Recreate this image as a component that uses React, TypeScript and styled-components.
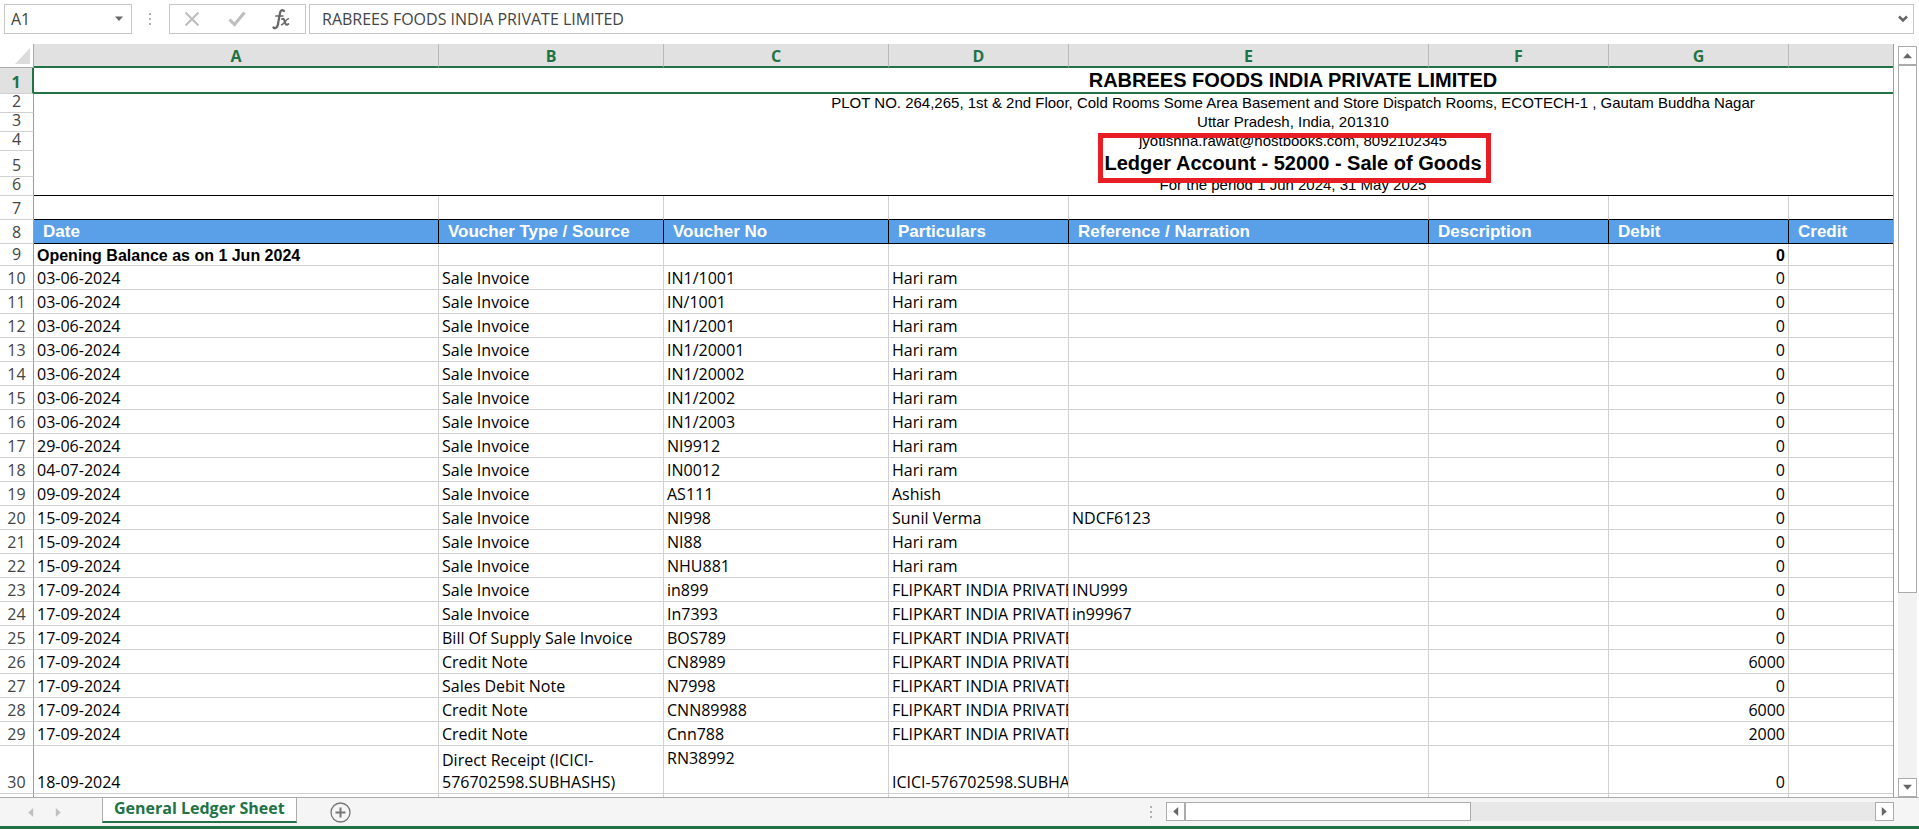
import React from "react";
import styled, { createGlobalStyle } from "styled-components";

const SANS = '"Open Sans", "Noto Sans", sans-serif';
const ARIAL = '"Liberation Sans", Arial, sans-serif';

const Global = createGlobalStyle`
  *, *::before, *::after { box-sizing: border-box; }
  body { margin: 0; background: #fff; font-family: ${SANS}; }
  button, input { font: inherit; margin: 0; }
`;

const Workbook = styled.div`
  display: flex;
  flex-direction: column;
  height: 100vh;
  overflow: hidden;
`;

const FormulaBar = styled.header`
  display: flex;
  flex: none;
  height: 44px;
  padding: 4px 5px 10px 4px;
`;

const BoxedGroup = styled.div<{ $width?: number }>`
  display: flex;
  align-items: center;
  min-width: 0;
  border: 1px solid #c6c6c6;
  background: #fff;
  flex: ${(p) => (p.$width ? `0 0 ${p.$width}px` : "1")};
`;

const FieldInput = styled.input<{ $indent: number }>`
  flex: 1;
  min-width: 0;
  width: 100%;
  height: 28px;
  padding: 0 0 0 ${(p) => p.$indent}px;
  border: 0;
  outline: 0;
  background: transparent;
  color: #444;
  font-size: 16px;
`;

const IconButton = styled.button<{ $width: number }>`
  display: flex;
  flex: 0 0 ${(p) => p.$width}px;
  align-items: center;
  justify-content: center;
  height: 28px;
  padding: 0;
  border: 0;
  background: transparent;
`;

const Grip = styled.div<{ $width: number }>`
  display: flex;
  flex: 0 0 ${(p) => p.$width}px;
  align-items: center;
  justify-content: center;
`;

const Main = styled.main`
  display: flex;
  flex: 1;
  min-height: 0;
`;

const GridPane = styled.div`
  flex: 1;
  min-width: 0;
  overflow: hidden;
  border-right: 1px solid #9f9f9f;
`;

const Sheet = styled.table`
  width: 2552px;
  table-layout: fixed;
  border-collapse: separate;
  border-spacing: 0;
  color: #000;
  font-size: 16px;
  line-height: 22px;
`;

const Corner = styled.td`
  height: 24px;
  padding: 0 3px 3px 0;
  border-right: 1px solid #ababab;
  border-bottom: 1px solid #ababab;
  vertical-align: bottom;
  text-align: right;
  line-height: 0;
`;

const ColumnLabel = styled.th`
  height: 24px;
  padding: 2px 0 0;
  border-right: 1px solid #b8b8b8;
  border-bottom: 2px solid #217346;
  background: #e1e1e1;
  color: #217346;
  font-weight: 700;
  line-height: 20px;
`;

const RowLabel = styled.th<{ $active?: boolean }>`
  padding: 0;
  border-right: ${(p) => (p.$active ? "2px solid #217346" : "1px solid #9c9c9c")};
  border-bottom: 1px solid #d0d0d0;
  background: ${(p) => (p.$active ? "#e1e1e1" : "#fff")};
  color: ${(p) => (p.$active ? "#217346" : "#444")};
  font-weight: ${(p) => (p.$active ? 700 : 400)};
  vertical-align: bottom;
`;

const Clip = styled.div<{ $height: number; $align?: string; $spill?: boolean }>`
  display: flex;
  align-items: ${(p) => p.$align || "flex-end"};
  justify-content: center;
  height: ${(p) => p.$height}px;
  overflow: ${(p) => (p.$spill ? "visible" : "hidden")};
  white-space: nowrap;
`;

const Banner = styled.td<{ $edge?: "active" | "rule" }>`
  padding: 0;
  border-bottom: ${(p) =>
    p.$edge === "active" ? "2px solid #217346" : p.$edge === "rule" ? "1px solid #000" : "0"};
  font-family: ${ARIAL};
`;

const Heading = styled.span`
  position: relative;
  font-size: 20px;
  font-weight: 700;
  line-height: 24px;
`;

const Detail = styled.span`
  font-size: 15px;
  line-height: 20px;
`;

const Marker = styled.span`
  position: absolute;
  inset: -18px -9px -8px -6px;
  border: 5px solid #e81e25;
`;

const Cell = styled.td<{ $bold?: boolean; $number?: boolean; $top?: boolean; $rule?: boolean }>`
  padding: ${(p) => (p.$bold ? 2 : 1)}px 3px 0;
  overflow: hidden;
  border-right: 1px solid #d0d0d0;
  border-bottom: 1px solid ${(p) => (p.$rule ? "#000" : "#d0d0d0")};
  font-family: ${(p) => (p.$bold ? ARIAL : SANS)};
  font-weight: ${(p) => (p.$bold ? 700 : 400)};
  line-height: ${(p) => (p.$bold ? 19 : 22)}px;
  text-align: ${(p) => (p.$number ? "right" : "left")};
  vertical-align: ${(p) => (p.$top ? "top" : "bottom")};
  white-space: nowrap;
`;

const FieldName = styled.th`
  padding: 1px 9px 0;
  border-right: 1px solid #000;
  border-bottom: 1px solid #000;
  background: #5aa0e8;
  color: #fff;
  font-family: ${ARIAL};
  font-size: 17px;
  font-weight: 700;
  text-align: left;
`;

const Row = styled.tr<{ $height: number }>`
  height: ${(p) => p.$height}px;
`;

const VScroll = styled.div`
  display: flex;
  flex: 0 0 25px;
  flex-direction: column;
  padding: 2px 2px 0 4px;
`;

const VTrack = styled.div`
  flex: 1;
  background: #f2f2f2;
`;

const VThumb = styled.div`
  height: 74%;
  border: 1px solid #ababab;
  background: #fff;
`;

const ArrowButton = styled.button`
  display: flex;
  flex: 0 0 19px;
  align-items: center;
  justify-content: center;
  min-height: 19px;
  padding: 0;
  border: 1px solid #ababab;
  background: #fff;
`;

const TabBar = styled.footer`
  display: flex;
  flex: none;
  height: 32px;
  border-top: 1px solid #ababab;
  border-bottom: 3px solid #217346;
  background: #f5f5f5;
`;

const TabNav = styled.nav`
  display: flex;
  flex: 0 0 102px;
  padding: 0 28px 0 16px;
`;

const SheetTab = styled.button`
  height: 25px;
  padding: 0 11px 3px;
  border: 1px solid #ababab;
  border-top: 0;
  border-bottom: 2px solid #217346;
  background: #fff;
  color: #217346;
  font-size: 16px;
  font-weight: 700;
  line-height: 20px;
`;

const AddSheet = styled.button`
  display: flex;
  align-items: center;
  height: 28px;
  padding: 0 0 0 33px;
  border: 0;
  background: transparent;
`;

const HScrollArea = styled.div`
  display: flex;
  flex: 0 0 770px;
  height: 28px;
  padding-right: 25px;
  margin-left: auto;
`;

const HScroll = styled.div`
  display: flex;
  flex: 1;
  height: 19px;
  margin-top: 4px;
`;

const HTrack = styled.div`
  flex: 1;
  background: #e8e8e8;
`;

const HThumb = styled.div`
  width: 41.5%;
  height: 19px;
  border: 1px solid #ababab;
  background: #fff;
`;

type Direction = "up" | "down" | "left" | "right";
const ANGLE: Record<Direction, number> = { up: 0, right: 90, down: 180, left: 270 };

function Triangle({ dir, color = "#666", size = 9 }: { dir: Direction; color?: string; size?: number }) {
  return (
    <svg width={size} height={size} viewBox="0 0 10 10" aria-hidden="true">
      <path d="M0 8 5 2.5 10 8Z" fill={color} transform={`rotate(${ANGLE[dir]} 5 5)`} />
    </svg>
  );
}

function Dots() {
  return (
    <svg width="3" height="12" viewBox="0 0 3 12" aria-hidden="true">
      <path d="M0 0h2v2H0zM0 5h2v2H0zM0 10h2v2H0z" fill="#b0b0b0" />
    </svg>
  );
}

const COLUMNS: [string, number][] = [
  ["A", 405], ["B", 225], ["C", 225], ["D", 180], ["E", 360], ["F", 180], ["G", 180], ["", 763],
];

const FIELDS = [
  "Date", "Voucher Type / Source", "Voucher No", "Particulars",
  "Reference / Narration", "Description", "Debit", "Credit",
];

const OPENING = ["Opening Balance as on 1 Jun 2024", "", "", "", "", "", "0", ""];

const FK = "FLIPKART INDIA PRIVATE";
type Entry = [date: string, type: string, no: string, party: string, ref: string, debit: string];

const ENTRIES: Entry[] = [
  ["03-06-2024", "Sale Invoice", "IN1/1001", "Hari ram", "", "0"],
  ["03-06-2024", "Sale Invoice", "IN/1001", "Hari ram", "", "0"],
  ["03-06-2024", "Sale Invoice", "IN1/2001", "Hari ram", "", "0"],
  ["03-06-2024", "Sale Invoice", "IN1/20001", "Hari ram", "", "0"],
  ["03-06-2024", "Sale Invoice", "IN1/20002", "Hari ram", "", "0"],
  ["03-06-2024", "Sale Invoice", "IN1/2002", "Hari ram", "", "0"],
  ["03-06-2024", "Sale Invoice", "IN1/2003", "Hari ram", "", "0"],
  ["29-06-2024", "Sale Invoice", "NI9912", "Hari ram", "", "0"],
  ["04-07-2024", "Sale Invoice", "IN0012", "Hari ram", "", "0"],
  ["09-09-2024", "Sale Invoice", "AS111", "Ashish", "", "0"],
  ["15-09-2024", "Sale Invoice", "NI998", "Sunil Verma", "NDCF6123", "0"],
  ["15-09-2024", "Sale Invoice", "NI88", "Hari ram", "", "0"],
  ["15-09-2024", "Sale Invoice", "NHU881", "Hari ram", "", "0"],
  ["17-09-2024", "Sale Invoice", "in899", FK, "INU999", "0"],
  ["17-09-2024", "Sale Invoice", "In7393", FK, "in99967", "0"],
  ["17-09-2024", "Bill Of Supply Sale Invoice", "BOS789", FK, "", "0"],
  ["17-09-2024", "Credit Note", "CN8989", FK, "", "6000"],
  ["17-09-2024", "Sales Debit Note", "N7998", FK, "", "0"],
  ["17-09-2024", "Credit Note", "CNN89988", FK, "", "6000"],
  ["17-09-2024", "Credit Note", "Cnn788", FK, "", "2000"],
];

export default function App() {
  return (
    <Workbook>
      <Global />
      <FormulaBar>
        <BoxedGroup $width={128}>
          <FieldInput $indent={6} aria-label="Name box" defaultValue="A1" />
          <IconButton $width={24} aria-label="Name list">
            <Triangle dir="down" size={8} />
          </IconButton>
        </BoxedGroup>
        <Grip $width={37}><Dots /></Grip>
        <BoxedGroup $width={137}>
          <IconButton $width={44} aria-label="Cancel">
            <svg width="16" height="16" viewBox="0 0 16 16" fill="none" stroke="#bdbdbd" strokeWidth="2">
              <path d="M1.5 1.5 14.5 14.5M14.5 1.5 1.5 14.5" />
            </svg>
          </IconButton>
          <IconButton $width={46} aria-label="Enter">
            <svg width="18" height="16" viewBox="0 0 18 16" fill="none" stroke="#bdbdbd" strokeWidth="3">
              <path d="M1.5 8.5 6.5 13.5 16.5 1.5" />
            </svg>
          </IconButton>
          <IconButton $width={42} aria-label="Insert function">
            <svg width="18" height="22" viewBox="0 0 18 22" fill="none" stroke="#666" strokeLinecap="round">
              <path d="M12 3C10 1 8.400 2.500 7.800 6L6 16C5.400 19.500 3.500 21 1.500 19.500" strokeWidth="2.200" />
              <path d="M3.800 8H11" strokeWidth="1.500" />
              <path d="M10 11C11.600 10 12.200 11.500 12.900 14S14.300 17.500 16.300 16" strokeWidth="2" />
              <path d="M16.500 10.800C14.500 10.800 12 16.600 9.500 16.800" strokeWidth="1.400" />
            </svg>
          </IconButton>
        </BoxedGroup>
        <Grip $width={3} />
        <BoxedGroup>
          <FieldInput $indent={12} aria-label="Formula" defaultValue="RABREES FOODS INDIA PRIVATE LIMITED" />
          <IconButton $width={20} aria-label="Expand formula bar">
            <svg width="10" height="8" viewBox="0 0 10 8" fill="none" stroke="#666" strokeWidth="2.500">
              <path d="M1 1.500 5 5.500 9 1.500" />
            </svg>
          </IconButton>
        </BoxedGroup>
      </FormulaBar>

      <Main>
        <GridPane>
          <Sheet>
            <colgroup>
              <col width={34} />
              {COLUMNS.map(([name, width]) => <col key={name} width={width} />)}
            </colgroup>
            <thead>
              <tr>
                <Corner>
                  <svg width="15" height="16" viewBox="0 0 15 16" aria-hidden="true">
                    <path d="M15 0V16H0Z" fill="#dcdcdc" />
                  </svg>
                </Corner>
                {COLUMNS.map(([name]) => <ColumnLabel key={name} scope="col">{name}</ColumnLabel>)}
              </tr>
            </thead>
            <tbody>
              <tr>
                <RowLabel $active scope="row"><Clip $height={25} $spill>1</Clip></RowLabel>
                <Banner $edge="active" colSpan={8}>
                  <Clip $height={24} $align="center"><Heading>RABREES FOODS INDIA PRIVATE LIMITED</Heading></Clip>
                </Banner>
              </tr>
              <tr>
                <RowLabel scope="row"><Clip $height={18} $spill>2</Clip></RowLabel>
                <Banner colSpan={8}>
                  <Clip $height={19} $spill>
                    <Detail>PLOT NO. 264,265, 1st &amp; 2nd Floor, Cold Rooms Some Area Basement and Store Dispatch Rooms, ECOTECH-1 , Gautam Buddha Nagar</Detail>
                  </Clip>
                </Banner>
              </tr>
              <tr>
                <RowLabel scope="row"><Clip $height={18} $spill>3</Clip></RowLabel>
                <Banner colSpan={8}><Clip $height={19} $spill><Detail>Uttar Pradesh, India, 201310</Detail></Clip></Banner>
              </tr>
              <tr>
                <RowLabel scope="row"><Clip $height={18} $spill>4</Clip></RowLabel>
                <Banner colSpan={8}><Clip $height={19} $spill><Detail>jyotishna.rawat@hostbooks.com, 8092102345</Detail></Clip></Banner>
              </tr>
              <tr>
                <RowLabel scope="row"><Clip $height={25} $spill>5</Clip></RowLabel>
                <Banner colSpan={8}>
                  <Clip $height={26} $align="flex-start" $spill>
                    <Heading>Ledger Account - 52000 - Sale of Goods<Marker /></Heading>
                  </Clip>
                </Banner>
              </tr>
              <tr>
                <RowLabel scope="row"><Clip $height={18} $spill>6</Clip></RowLabel>
                <Banner $edge="rule" colSpan={8}><Clip $height={18} $spill><Detail>For the period 1 Jun 2024, 31 May 2025</Detail></Clip></Banner>
              </tr>
              <Row $height={24}>
                <RowLabel scope="row">7</RowLabel>
                {FIELDS.map((f) => <Cell key={f} $rule />)}
              </Row>
              <Row $height={24}>
                <RowLabel scope="row">8</RowLabel>
                {FIELDS.map((f) => <FieldName key={f} scope="col">{f}</FieldName>)}
              </Row>
              <Row $height={22}>
                <RowLabel scope="row"><Clip $height={21} $spill>9</Clip></RowLabel>
                {OPENING.map((text, i) => <Cell key={i} $bold $number={i === 6}>{text}</Cell>)}
              </Row>
              {ENTRIES.map(([date, type, no, party, ref, debit], i) => (
                <Row key={i} $height={24}>
                  <RowLabel scope="row">{i + 10}</RowLabel>
                  <Cell>{date}</Cell>
                  <Cell>{type}</Cell>
                  <Cell>{no}</Cell>
                  <Cell>{party}</Cell>
                  <Cell>{ref}</Cell>
                  <Cell />
                  <Cell $number>{debit}</Cell>
                  <Cell />
                </Row>
              ))}
              <Row $height={48}>
                <RowLabel scope="row">30</RowLabel>
                <Cell>18-09-2024</Cell>
                <Cell>Direct Receipt (ICICI-<br />576702598.SUBHASHS)</Cell>
                <Cell $top>RN38992</Cell>
                <Cell>ICICI-576702598.SUBHA</Cell>
                <Cell />
                <Cell />
                <Cell $number>0</Cell>
                <Cell />
              </Row>
              <Row $height={24}>
                <RowLabel />
                {FIELDS.map((f) => <Cell key={f} />)}
              </Row>
            </tbody>
          </Sheet>
        </GridPane>
        <VScroll>
          <ArrowButton aria-label="Scroll up"><Triangle dir="up" /></ArrowButton>
          <VTrack><VThumb /></VTrack>
          <ArrowButton aria-label="Scroll down"><Triangle dir="down" /></ArrowButton>
        </VScroll>
      </Main>

      <TabBar>
        <TabNav aria-label="Sheets">
          <IconButton $width={28} aria-label="Previous sheet"><Triangle dir="left" color="#c0c0c0" /></IconButton>
          <IconButton $width={28} aria-label="Next sheet"><Triangle dir="right" color="#c0c0c0" /></IconButton>
        </TabNav>
        <SheetTab>General Ledger Sheet</SheetTab>
        <AddSheet aria-label="New sheet">
          <svg width="21" height="21" viewBox="0 0 21 21" fill="none" stroke="#777">
            <circle cx="10.500" cy="10.500" r="9.500" strokeWidth="1.300" />
            <path d="M10.500 5.500V15.500M5.500 10.500H15.500" strokeWidth="2" />
          </svg>
        </AddSheet>
        <HScrollArea>
          <Grip $width={5}><Dots /></Grip>
          <Grip $width={12} />
          <HScroll>
            <ArrowButton aria-label="Scroll left"><Triangle dir="left" /></ArrowButton>
            <HTrack><HThumb /></HTrack>
            <ArrowButton aria-label="Scroll right"><Triangle dir="right" /></ArrowButton>
          </HScroll>
        </HScrollArea>
      </TabBar>
    </Workbook>
  );
}
